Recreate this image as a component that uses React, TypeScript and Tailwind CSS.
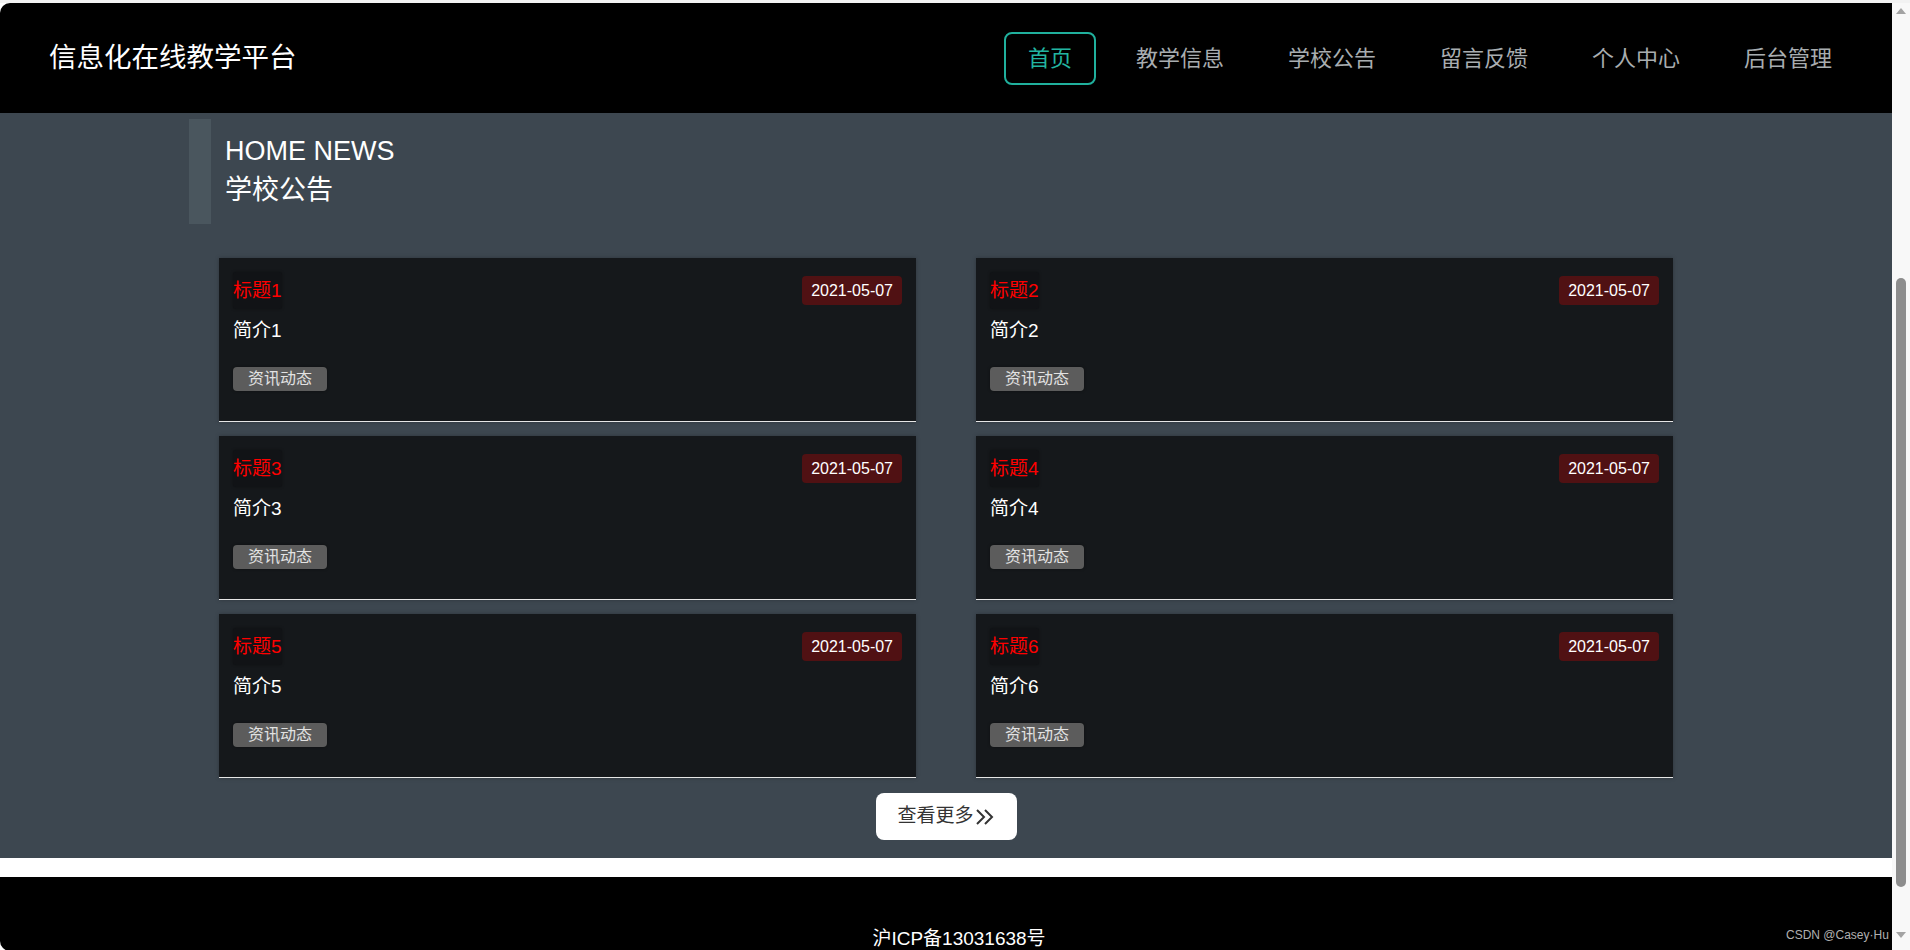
import React from "react";

const FONT = "font-['Liberation_Sans','Noto_Sans_CJK_SC',sans-serif]";

const navItems = ["首页", "教学信息", "学校公告", "留言反馈", "个人中心", "后台管理"];

const cards = [1, 2, 3, 4, 5, 6].map((i) => ({
  title: `标题${i}`,
  intro: `简介${i}`,
  date: "2021-05-07",
  tag: "资讯动态",
}));

function Card({ title, intro, date, tag }: { title: string; intro: string; date: string; tag: string }) {
  return (
    <div className="h-[164px] bg-[#15181b] border-b border-[#e6e6e6] px-[14px] pt-[14px] shadow-[0_0_4px_rgba(0,0,0,0.25)]">
      <div className="flex h-[37px] items-center justify-between">
        <div className="flex h-[37px] items-center rounded-[3px] bg-[#111316] shadow-[0_0_3px_rgba(0,0,0,0.35)] text-[19px] leading-[24px] text-[#ff0000]">
          {title}
        </div>
        <div className="flex h-[29px] items-center rounded-[4px] bg-[#501113] px-[9px] text-[16px] text-white">
          {date}
        </div>
      </div>
      <div className="mt-[10px] text-[19px] leading-[24px] text-white">{intro}</div>
      <div className="mt-[24px] flex">
        <div className="flex h-[24px] items-center rounded-[4px] bg-[#5c5c5c] px-[15px] text-[16px] text-[#e2e2e2] shadow-[0_0_3px_rgba(0,0,0,0.4)]">
          {tag}
        </div>
      </div>
    </div>
  );
}

export default function App() {
  return (
    <div className={`relative flex h-[950px] w-full flex-col overflow-hidden bg-white ${FONT}`}>
      <div className="h-[3px] w-full bg-[#f2f2f2]" />
      <div className="flex flex-1 overflow-hidden">
        {/* main page */}
        <div className="flex min-w-0 flex-1 flex-col">
          {/* header */}
          <header className="flex h-[110px] shrink-0 items-center justify-between rounded-tl-[10px] bg-black pl-[49px] pr-[36px]">
            <div className="text-[27.5px] leading-[36px] text-white">信息化在线教学平台</div>
            <nav className="flex items-center gap-[16px]">
              {navItems.map((item, idx) => (
                <div
                  key={item}
                  className={
                    idx === 0
                      ? "flex h-[53px] items-center rounded-[8px] border-2 border-[#20b09d] px-[22px] text-[22px] text-[#22b5a1]"
                      : "flex h-[53px] items-center rounded-[8px] border-2 border-transparent px-[22px] text-[22px] text-[#a8adb0]"
                  }
                >
                  {item}
                </div>
              ))}
            </nav>
          </header>

          {/* content */}
          <section className="h-[745px] shrink-0 bg-[#3d4750]">
            <div className="mx-auto w-[1514px]">
              <div className="mt-[6px] flex h-[105px]">
                <div className="w-[22px] bg-[#4a565e]" />
                <div className="pl-[14px] pt-[13px] text-[27px] leading-[39px] text-white">
                  <div>HOME NEWS</div>
                  <div>学校公告</div>
                </div>
              </div>

              <div className="mt-[34px] grid grid-cols-2 gap-y-[14px]">
                {cards.map((c) => (
                  <div key={c.title} className="px-[30px]">
                    <Card {...c} />
                  </div>
                ))}
              </div>

              <div className="mt-[15px] flex justify-center">
                <div className="flex h-[47px] w-[141px] items-center justify-center rounded-[8px] bg-white text-[19px] text-[#333333]">
                  <span>查看更多</span>
                  <svg width="20" height="16" viewBox="0 0 20 16" fill="none" stroke="#333333" strokeWidth="2" className="ml-[1px]">
                    <polyline points="2,1 9,8 2,15" />
                    <polyline points="10,1 17,8 10,15" />
                  </svg>
                </div>
              </div>
            </div>
          </section>

          <div className="h-[19px] shrink-0 bg-white" />

          {/* footer */}
          <footer className="flex-1 rounded-bl-[10px] bg-black pl-[26px] pt-[50px] text-center text-[19px] leading-[24px] text-white">
            沪ICP备13031638号
          </footer>
        </div>

        {/* scrollbar */}
        <div className="flex w-[18px] shrink-0 flex-col items-center bg-[#f8f8f8]">
          <div className="mt-[5px] h-0 w-0 border-x-[5px] border-b-[6px] border-x-transparent border-b-[#a3a3a3]" />
          <div className="mt-[264px] h-[609px] w-[10px] rounded-full bg-[#8d8d8d]" />
          <div className="flex-1" />
          <div className="mb-[12px] h-0 w-0 border-x-[5px] border-t-[6px] border-x-transparent border-t-[#a3a3a3]" />
        </div>
      </div>

      {/* watermark */}
      <div className="pointer-events-none absolute left-[1786px] top-[926px] text-[12px] text-[#b0b0b0]">
        CSDN @Casey·Hu
      </div>
    </div>
  );
}
